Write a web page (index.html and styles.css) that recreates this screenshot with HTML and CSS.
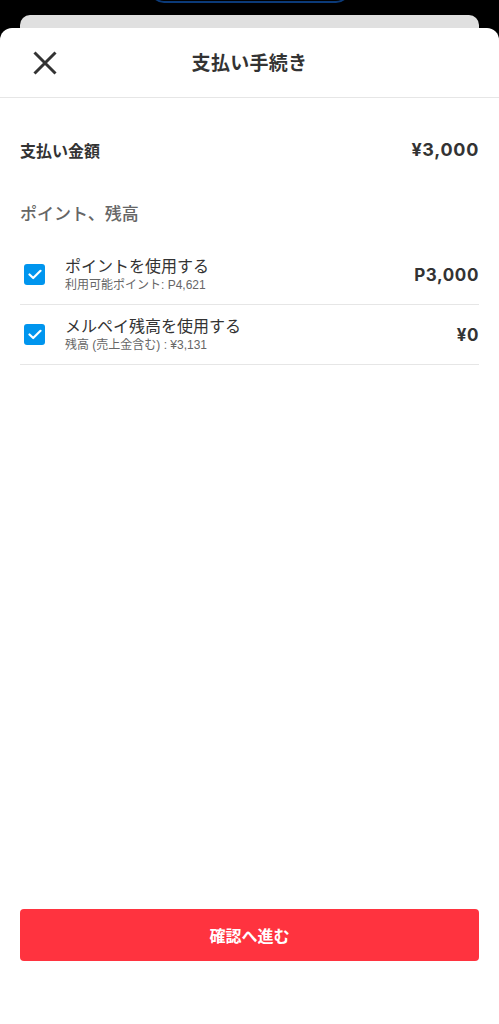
FILE: index.html
```html
<!DOCTYPE html>
<html lang="ja">
<head>
<meta charset="utf-8">
<link rel="stylesheet" href="styles.css">
</head>
<body>
<div class="pill"></div>
<div class="behind"></div>
<div class="sheet">
  <header class="head">
    <div class="close">
      <svg width="24" height="24" viewBox="0 0 24 24"><path d="M1.5 1.5 L22.5 22.5 M22.5 1.5 L1.5 22.5" stroke="#333" stroke-width="3" fill="none"/></svg>
    </div>
    <h1 class="title">支払い手続き</h1>
    <div></div>
  </header>
  <main class="content">
    <div class="total">
      <span class="total-label">支払い金額</span>
      <span class="total-value">¥3,000</span>
    </div>
    <h2 class="section">ポイント、残高</h2>
    <div class="row">
      <span class="check"><svg width="14" height="11" viewBox="0 0 14 11"><path d="M1.5 5.5 L5.2 9 L12.5 1.8" stroke="#fff" stroke-width="2.2" fill="none" stroke-linecap="round" stroke-linejoin="round"/></svg></span>
      <div class="texts">
        <div class="row-title">ポイントを使用する</div>
        <div class="row-sub">利用可能ポイント: P4,621</div>
      </div>
      <span class="row-value">P3,000</span>
    </div>
    <div class="row">
      <span class="check"><svg width="14" height="11" viewBox="0 0 14 11"><path d="M1.5 5.5 L5.2 9 L12.5 1.8" stroke="#fff" stroke-width="2.2" fill="none" stroke-linecap="round" stroke-linejoin="round"/></svg></span>
      <div class="texts">
        <div class="row-title">メルペイ残高を使用する</div>
        <div class="row-sub">残高 (売上金含む) : ¥3,131</div>
      </div>
      <span class="row-value">¥0</span>
    </div>
  </main>
  <div class="footer">
    <button class="cta">確認へ進む</button>
  </div>
</div>
</body>
</html>
```
FILE: styles.css
```css
* { box-sizing: border-box; }
html, body { margin: 0; padding: 0; }
body {
  background: #000;
  width: 499px;
  height: 1024px;
  overflow: hidden;
  font-family: "Noto Sans CJK JP", sans-serif;
  color: #333;
}
.pill {
  width: 200px;
  height: 23px;
  margin: -20px auto 0;
  border: 2px solid #0b3a78;
  border-radius: 0 0 14px 14px;
}
.behind {
  margin: 12px 20px 0;
  height: 13px;
  background: #e0e0e0;
  border-radius: 10px 10px 0 0;
}
.sheet {
  background: #fff;
  border-radius: 12px 12px 0 0;
  height: 996px;
  display: flex;
  flex-direction: column;
}
.head {
  height: 70px;
  border-bottom: 1px solid #e6e6e6;
  display: grid;
  grid-template-columns: 1fr auto 1fr;
  align-items: center;
}
.close {
  padding-left: 33px;
  display: flex;
  align-items: center;
  padding-top: 1px;
}
.title {
  margin: 0 0 2px;
  font-size: 19px;
  line-height: 26px;
  font-weight: 700;
  color: #333;
  letter-spacing: 0.3px;
}
.content {
  padding: 0 20px;
}
.total {
  display: flex;
  justify-content: space-between;
  align-items: center;
  height: 26px;
  margin-top: 39px;
}
.total-label {
  font-size: 16px;
  line-height: 26px;
  font-weight: 700;
}
.total-value {
  font-family: "Inter", "Liberation Sans", sans-serif;
  font-size: 18px;
  line-height: 26px;
  font-weight: 700;
  letter-spacing: 0.7px;
}
.section {
  margin: 37px 0 0;
  font-size: 17px;
  font-weight: 500;
  color: #666;
  line-height: 26px;
}
.row {
  display: flex;
  align-items: center;
  height: 60px;
  border-bottom: 1px solid #e6e6e6;
}
.section + .row { margin-top: 19px; }
.check {
  width: 21px;
  height: 21px;
  margin-left: 4px;
  margin-right: 20px;
  border-radius: 3px;
  background: #0095ee;
  display: flex;
  align-items: center;
  justify-content: center;
}
.texts {
  flex: 1;
  display: flex;
  flex-direction: column;
  margin-top: -2px;
}
.row-title {
  font-size: 16px;
  line-height: 22px;
  color: #333;
}
.row-sub {
  font-family: "Liberation Sans", "Noto Sans CJK JP", sans-serif;
  font-size: 12px;
  line-height: 18px;
  color: #666;
}
.row-value {
  font-family: "Inter", "Liberation Sans", sans-serif;
  font-size: 17px;
  line-height: 24px;
  font-weight: 700;
  color: #333;
  letter-spacing: 0.6px;
}
.footer {
  margin-top: auto;
  padding: 0 20px 63px;
}
.cta {
  width: 100%;
  height: 52px;
  border: 0;
  border-radius: 4px;
  background: #ff333f;
  color: #fff;
  font-family: inherit;
  font-size: 16px;
  font-weight: 700;
}
```
